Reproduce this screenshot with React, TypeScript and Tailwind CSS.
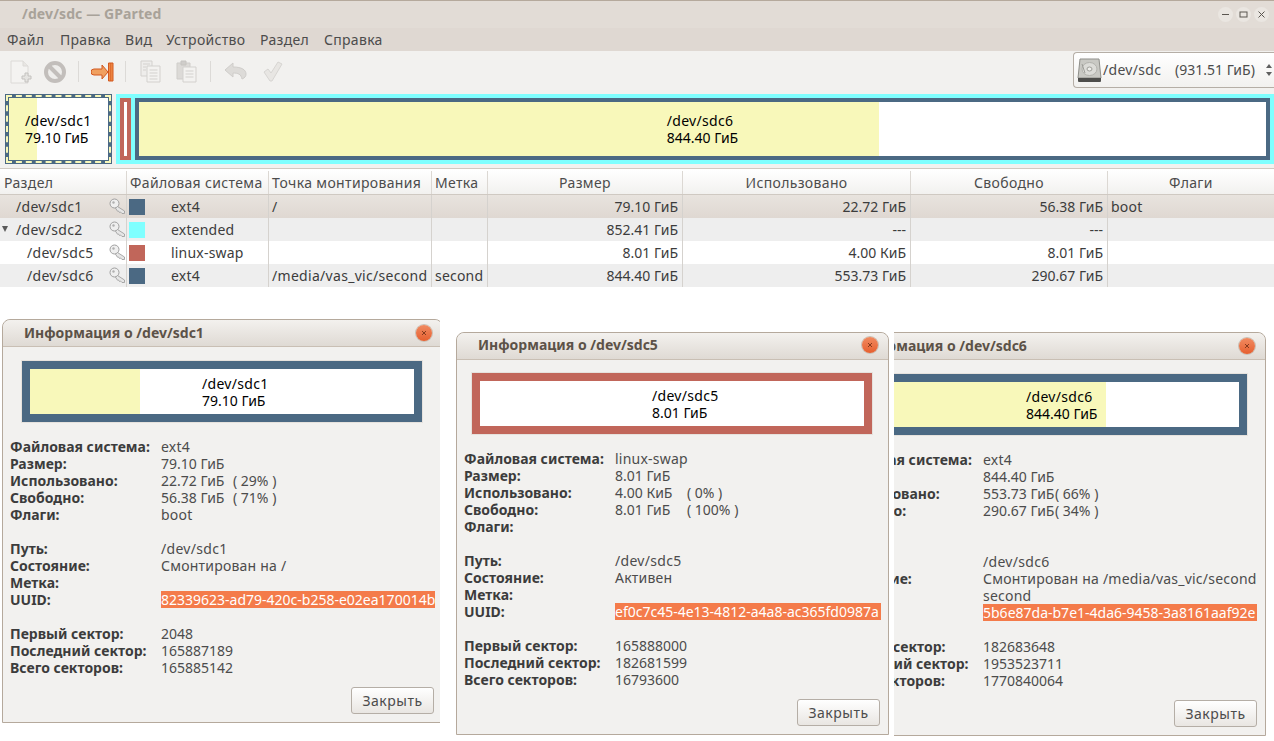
import type { ReactNode } from "react"

const font = { fontFamily: '"Noto Sans", sans-serif' }

const columns = "grid grid-cols-[127px_142px_163px_56px_195px_228px_197px_166px]"

const rows = [
  { name: "/dev/sdc1", indent: "pl-4", color: "bg-[#4b6983]", fs: "ext4", mount: "/", label: "", size: "79.10 ГиБ", used: "22.72 ГиБ", free: "56.38 ГиБ", flags: "boot", bg: "bg-gradient-to-b from-[#e8e3de] to-[#dfd8d2]" },
  { name: "/dev/sdc2", indent: "pl-4", color: "bg-[#7fffff]", fs: "extended", mount: "", label: "", size: "852.41 ГиБ", used: "---", free: "---", flags: "", bg: "bg-[#eeeeee]", arrow: true },
  { name: "/dev/sdc5", indent: "pl-[27px]", color: "bg-[#c1665a]", fs: "linux-swap", mount: "", label: "", size: "8.01 ГиБ", used: "4.00 КиБ", free: "8.01 ГиБ", flags: "", bg: "bg-white" },
  { name: "/dev/sdc6", indent: "pl-[27px]", color: "bg-[#4b6983]", fs: "ext4", mount: "/media/vas_vic/second", label: "second", size: "844.40 ГиБ", used: "553.73 ГиБ", free: "290.67 ГиБ", flags: "", bg: "bg-[#eeeeee]" },
]

function KeyIcon() {
  return (
    <svg width="17" height="16" viewBox="0 0 17 16" className="absolute left-[109px] top-[3px]">
      <circle cx="5.500" cy="5.500" r="4.500" fill="#efefef" stroke="#a0a0a0" />
      <circle cx="4.500" cy="4.500" r="1.200" fill="#b0b0b0" />
      <path d="M8.500 8.500l7 4.500v2.500h-2.500l-1.500-1.500-1 .5-1-1.500-1 .2-2-3z" fill="#e6e6e6" stroke="#a0a0a0" strokeWidth="0.9" />
    </svg>
  )
}

function NewIcon() {
  return (
    <svg width="22" height="24" viewBox="0 0 22 24">
      <path d="M1 1h12l5 5v17H1z" fill="#f4f3f1" stroke="#dcdad7" />
      <path d="M13 1v5h5" fill="#e8e6e3" stroke="#dcdad7" />
      <path d="M15 13h3v3h3v3h-3v3h-3v-3h-3v-3h3z" fill="#e5e4e1" stroke="#c4c2bf" />
    </svg>
  )
}

function CancelIcon() {
  return (
    <svg width="22" height="22" viewBox="0 0 22 22">
      <circle cx="11" cy="11" r="9" fill="#eeedeb" stroke="#c2bebb" strokeWidth="4" />
      <path d="M5 5l12 12" stroke="#c2bebb" strokeWidth="4" />
    </svg>
  )
}

function ApplyIcon() {
  return (
    <svg width="23" height="20" viewBox="0 0 23 20">
      <path d="M3 7h8V3l6 7-6 7v-4H3a3 3 0 0 1 0-6z" fill="#f0a060" stroke="#d2581f" strokeLinejoin="round" />
      <path d="M17.500 1h4.500v18h-4.500z" fill="#ef8a45" stroke="#d2581f" />
      <path d="M19.700 1v18" stroke="#d2581f" strokeWidth="0.7" />
    </svg>
  )
}

function CopyIcon() {
  return (
    <svg width="21" height="23" viewBox="0 0 21 23">
      <path d="M1 1h11v15H1z" fill="#eeedeb" stroke="#d3d1ce" />
      <path d="M7 6h13v16H7z" fill="#f3f2f0" stroke="#d3d1ce" />
      <path d="M9.500 10h8M9.500 13h8M9.500 16h8M9.500 19h8M3 4h7M3 7h3M3 10h3" stroke="#d3d1ce" />
    </svg>
  )
}

function PasteIcon() {
  return (
    <svg width="21" height="23" viewBox="0 0 21 23">
      <path d="M1 3h13v16H1z" fill="#dcdad7" stroke="#cfcdca" />
      <path d="M5 1h5v4H5z" fill="#cfcdca" stroke="#c6c4c1" />
      <path d="M7 7h13v15H7z" fill="#f3f2f0" stroke="#d3d1ce" />
      <path d="M9.500 11h8M9.500 14h8M9.500 17h8" stroke="#d3d1ce" />
    </svg>
  )
}

function UndoIcon() {
  return (
    <svg width="23" height="19" viewBox="0 0 23 19">
      <path d="M9 1L1 8l8 7v-4c5 0 8 1 9 6 3-1 4-3 4-5 0-4-4-7-13-7z" fill="#dddbd8" stroke="#cfcdca" strokeLinejoin="round" />
    </svg>
  )
}

function CheckIcon() {
  return (
    <svg width="20" height="21" viewBox="0 0 20 21">
      <path d="M1 11l4-3 3 4 7-11 4 2-10 17h-2z" fill="#e8e6e3" stroke="#d7d5d2" strokeLinejoin="round" />
    </svg>
  )
}

function DiskIcon() {
  return (
    <svg width="25" height="25" viewBox="0 0 25 25">
      <path d="M3 1h19l2 19H1z" fill="#c9c9c4" stroke="#8f8f8a" />
      <path d="M1 20h23v3a1 1 0 0 1-1 1H2a1 1 0 0 1-1-1z" fill="#4e4e4c" />
      <ellipse cx="12.500" cy="11" rx="7.500" ry="6.500" fill="#dcdcd8" stroke="#b2b2ad" />
      <ellipse cx="12.500" cy="11" rx="2.500" ry="2" fill="#f0f0ec" stroke="#9d9d98" />
      <path d="M5 6l3 9" stroke="#9d9d98" />
    </svg>
  )
}

function WindowButton({ children }: { children: ReactNode }) {
  return (
    <span className="flex h-[15px] w-[15px] items-center justify-center rounded-full bg-[#eae6e1]">
      <svg width="9" height="9" viewBox="0 0 9 9" stroke="#5a5650" fill="none">
        {children}
      </svg>
    </span>
  )
}

function CloseButton() {
  return (
    <span className="flex h-[16px] w-[16px] items-center justify-center rounded-full bg-gradient-to-b from-[#f08a60] to-[#e65f2e] shadow-[0_0_0_1px_#c9bfb4]">
      <svg width="6" height="6" viewBox="0 0 6 6" stroke="#7a3418" strokeWidth="0.9">
        <path d="M1 1l4 4M5 1l-4 4" />
      </svg>
    </span>
  )
}

interface PartitionGraphProps {
  color: string
  usedWidth: string
  textPad: string
  name: string
  size: string
}

function PartitionGraph({ color, usedWidth, textPad, name, size }: PartitionGraphProps) {
  return (
    <div className="h-[63px] w-[402px] shrink-0 border border-[#e6e2dd]">
      <div className={`h-full border-[8px] ${color}`}>
        <div className="relative h-full bg-white">
          <div className={`absolute inset-y-0 left-0 bg-[#f8f8ba] ${usedWidth}`} />
          <div className={`relative pt-[6px] text-sm leading-[17px] text-black ${textPad}`}>
            <div className="tracking-[0.3px]">{name}</div>
            <div>{size}</div>
          </div>
        </div>
      </div>
    </div>
  )
}

function InfoRow({ label, children }: { label?: string; children?: ReactNode }) {
  return (
    <div className="flex h-[17px] text-sm leading-[17px] whitespace-nowrap">
      <div className="w-[151px] shrink-0 font-bold text-[#3c3c3c]">{label}</div>
      <div className="text-[#4c4c4c]">{children}</div>
    </div>
  )
}

interface InfoProps {
  title: string
  graph: ReactNode
  fs: string
  size: string
  used: string
  usedPct: string
  free: string
  freePct: string
  flags: string
  path: string
  state: string
  label: string
  uuid: string
  first: string
  last: string
  total: string
  graphPad: string
  uuidWidth: string
  rowPad: string
  titlePad: string
  btnPad: string
  className: string
}

function InfoDialog(p: InfoProps) {
  return (
    <div className={`flex shrink-0 flex-col rounded-t-[8px] border border-[#b5a99c] bg-[#f2f1ef] ${p.className}`}>
      <div className={`flex h-[27px] shrink-0 items-center justify-between rounded-t-[8px] border-b border-[#c9bfb4] bg-gradient-to-b from-[#f3f1ee] to-[#dfdad4] pr-[10px] ${p.titlePad}`}>
        <span className="text-sm font-bold text-[#5c5248]">{p.title}</span>
        <CloseButton />
      </div>
      <div className={p.graphPad}>{p.graph}</div>
      <div className={`mt-[15px] ${p.rowPad}`}>
        <InfoRow label="Файловая система:">
          <span className="tracking-[0.22px]">{p.fs}</span>
        </InfoRow>
        <InfoRow label="Размер:">{p.size}</InfoRow>
        <InfoRow label="Использовано:">
          <span className="inline-block w-[72px]">{p.used}</span>
          {p.usedPct}
        </InfoRow>
        <InfoRow label="Свободно:">
          <span className="inline-block w-[72px]">{p.free}</span>
          {p.freePct}
        </InfoRow>
        <InfoRow label="Флаги:">
          <span className="tracking-[0.22px]">{p.flags}</span>
        </InfoRow>
        <div className="h-[17px]" />
        <InfoRow label="Путь:">
          <span className="tracking-[0.3px]">{p.path}</span>
        </InfoRow>
        <InfoRow label="Состояние:">
          <span className="tracking-[0.22px]">{p.state}</span>
        </InfoRow>
        <InfoRow label="Метка:">
          <span className="tracking-[0.22px]">{p.label}</span>
        </InfoRow>
        <InfoRow label="UUID:">
          <span className={`block bg-[#f47b4a] text-white ${p.uuidWidth}`}>{p.uuid}</span>
        </InfoRow>
        <div className="h-[17px]" />
        <InfoRow label="Первый сектор:">{p.first}</InfoRow>
        <InfoRow label="Последний сектор:">{p.last}</InfoRow>
        <InfoRow label="Всего секторов:">{p.total}</InfoRow>
      </div>
      <div className={`mt-auto flex justify-end pb-2 ${p.btnPad}`}>
        <button className="h-[27px] w-[83px] rounded-[3px] border border-[#b5aea6] bg-gradient-to-b from-white to-[#e9e6e2] text-sm tracking-[0.5px] text-[#4c4c4c]">
          Закрыть
        </button>
      </div>
    </div>
  )
}

export default function App() {
  return (
    <div className="relative h-[741px] w-[1274px] overflow-hidden bg-white" style={font}>
      {/* Title bar */}
      <div className="flex h-[28px] items-center justify-between border-t border-[#b5a99c] bg-[#e2dcd6] pr-[5px] pl-[22px]">
        <span className="pb-[2px] text-sm font-bold tracking-[0.1px] text-[#a8a299]">/dev/sdc — GParted</span>
        <div className="flex gap-[3px]">
          <WindowButton>
            <path d="M1 4.500h7" />
          </WindowButton>
          <WindowButton>
            <rect x="1" y="2" width="7" height="5" />
          </WindowButton>
          <WindowButton>
            <path d="M1.500 1.500l6 6M7.500 1.500l-6 6" />
          </WindowButton>
        </div>
      </div>

      {/* Menu */}
      <div className="flex h-[23px] items-center bg-[#dfd8d2] pl-[7px] text-sm tracking-[0.3px] text-[#4c4c4c]">
        <span className="w-[53px]">Файл</span>
        <span className="w-[65px]">Правка</span>
        <span className="w-[41px]">Вид</span>
        <span className="w-[94px]">Устройство</span>
        <span className="w-[64px]">Раздел</span>
        <span>Справка</span>
      </div>

      {/* Toolbar */}
      <div className="flex h-[41px] items-center bg-[#f2f1ef] pl-[10px]">
        <NewIcon />
        <div className="ml-3">
          <CancelIcon />
        </div>
        <div className="ml-[12px] h-[21px] w-px bg-[#dcdad7]" />
        <div className="ml-[12px]">
          <ApplyIcon />
        </div>
        <div className="ml-[11px] h-[21px] w-px bg-[#dcdad7]" />
        <div className="ml-[14px]">
          <CopyIcon />
        </div>
        <div className="ml-[15px]">
          <PasteIcon />
        </div>
        <div className="ml-[13px] h-[21px] w-px bg-[#dcdad7]" />
        <div className="ml-[13px]">
          <UndoIcon />
        </div>
        <div className="ml-[16px]">
          <CheckIcon />
        </div>
        <div className="mb-[3px] ml-auto flex h-[36px] w-[201px] items-center gap-[1px] rounded-l-[4px] border border-r-0 border-[#b5aea6] bg-gradient-to-b from-white to-[#f2f1ef] pl-[3px] text-sm whitespace-nowrap text-[#4c4c4c]">
          <DiskIcon />
          <span className="w-[71px] tracking-[0.3px]">/dev/sdc</span>
          <span>(931.51 ГиБ)</span>
          <svg width="8" height="16" viewBox="0 0 8 16" className="ml-[9px]" fill="#5f5f5f">
            <path d="M4 2l3 4H1zM4 14l3-4H1z" />
          </svg>
        </div>
      </div>

      {/* Partition map */}
      <div className="flex h-[77px] gap-1 border-b border-[#cfc9c2] bg-[#f2f1ef] pt-[2px] pl-[5px]">
        <div className="h-[70px] w-[107px] border border-[#4b6983]">
          <div className="h-full border-[2px] border-dashed border-[#f8f8ba] bg-[#4b6983]">
            <div className="h-full p-px">
              <div className="relative h-full bg-white">
                <div className="absolute inset-y-0 left-0 w-[28px] bg-[#f8f8ba]" />
                <div className="relative pt-[14px] pl-[16px] text-sm leading-[17px] text-black">
                  <div className="tracking-[0.3px]">/dev/sdc1</div>
                  <div>79.10 ГиБ</div>
                </div>
              </div>
            </div>
          </div>
        </div>
        <div className="flex h-[70px] flex-1 gap-1 bg-[#7fffff] p-1">
          <div className="w-[11px] border-[4px] border-[#c1665a] bg-white" />
          <div className="flex-1 border-[4px] border-[#4b6983] bg-white">
            <div className="relative h-full">
              <div className="absolute inset-y-0 left-0 w-[740px] bg-[#f8f8ba]" />
              <div className="relative flex h-full justify-center pt-[10px] text-sm leading-[17px] text-black">
                <div>
                  <div className="tracking-[0.3px]">/dev/sdc6</div>
                  <div>844.40 ГиБ</div>
                </div>
              </div>
            </div>
          </div>
        </div>
      </div>

      <div className="h-px bg-white" />

      {/* Partition list */}
      <div className={`${columns} h-[25px] border-b border-[#cfc9c2] bg-gradient-to-b from-white to-[#f2f1ef] pt-px text-sm leading-[23px] tracking-[0.35px] text-[#4c4c4c]`}>
        <div className="border-r border-[#dcd8d3] pl-1">Раздел</div>
        <div className="border-r border-[#dcd8d3] pl-[3px]">Файловая система</div>
        <div className="border-r border-[#dcd8d3] pl-[3px]">Точка монтирования</div>
        <div className="border-r border-[#dcd8d3] pl-[3px]">Метка</div>
        <div className="border-r border-[#dcd8d3] text-center">Размер</div>
        <div className="border-r border-[#dcd8d3] text-center">Использовано</div>
        <div className="border-r border-[#dcd8d3] text-center">Свободно</div>
        <div className="text-center">Флаги</div>
      </div>
      {rows.map((row) => (
        <div key={row.name} className={`${columns} h-[23px] text-sm leading-[23px] text-[#3c3c3c] ${row.bg}`}>
          <div className={`relative border-r border-[#d5d2ce] tracking-[0.3px] ${row.indent}`}>
            {row.arrow && <span className="absolute top-[8px] left-[2px] h-0 w-0 border-t-[6px] border-r-[3.5px] border-l-[3.5px] border-t-[#5a5a5a] border-r-transparent border-l-transparent" />}
            {row.name}
            <KeyIcon />
          </div>
          <div className="flex items-center border-r border-[#d5d2ce] pl-[2px]">
            <span className={`h-4 w-4 shrink-0 ${row.color}`} />
            <span className="ml-[26px] tracking-[0.2px]">{row.fs}</span>
          </div>
          <div className="border-r border-[#d5d2ce] pl-[3px] tracking-[0.3px] whitespace-nowrap">{row.mount}</div>
          <div className="border-r border-[#d5d2ce] pl-[3px] tracking-[0.2px]">{row.label}</div>
          <div className="border-r border-[#d5d2ce] pr-1 text-right">{row.size}</div>
          <div className="border-r border-[#d5d2ce] pr-1 text-right">{row.used}</div>
          <div className="border-r border-[#d5d2ce] pr-1 text-right">{row.free}</div>
          <div className="pl-[3px] tracking-[0.2px]">{row.flags}</div>
        </div>
      ))}

      {/* Info dialogs, pasted over the page as separate windows */}
      <div className="absolute top-[319px] left-[2px] h-[404px] w-[438px] overflow-hidden">
        <InfoDialog
          className="h-[404px] w-[441px]"
          title="Информация о /dev/sdc1"
          titlePad="pl-[21px]"
          graphPad="mt-[13px] pl-[18px]"
          rowPad="pl-[7px]"
          btnPad="pr-[8px]"
          uuidWidth="w-[274px]"
          graph={<PartitionGraph color="border-[#4b6983]" usedWidth="w-[110px]" textPad="pl-[172px]" name="/dev/sdc1" size="79.10 ГиБ" />}
          fs="ext4"
          size="79.10 ГиБ"
          used="22.72 ГиБ"
          usedPct="( 29% )"
          free="56.38 ГиБ"
          freePct="( 71% )"
          flags="boot"
          path="/dev/sdc1"
          state="Смонтирован на /"
          label=""
          uuid="82339623-ad79-420c-b258-e02ea170014b"
          first="2048"
          last="165887189"
          total="165885142"
        />
      </div>

      <div className="absolute top-[332px] left-[456px]">
        <InfoDialog
          className="h-[403px] w-[433px]"
          title="Информация о /dev/sdc5"
          titlePad="pb-[2px] pl-[21px]"
          graphPad="mt-[12px] pl-[14px]"
          rowPad="pl-[7px]"
          btnPad="pr-[8px]"
          uuidWidth="w-[266px]"
          graph={<PartitionGraph color="border-[#c1665a]" usedWidth="w-0" textPad="pl-[172px]" name="/dev/sdc5" size="8.01 ГиБ" />}
          fs="linux-swap"
          size="8.01 ГиБ"
          used="4.00 КиБ"
          usedPct="( 0% )"
          free="8.01 ГиБ"
          freePct="( 100% )"
          flags=""
          path="/dev/sdc5"
          state="Активен"
          label=""
          uuid="ef0c7c45-4e13-4812-a4a8-ac365fd0987a"
          first="165888000"
          last="182681599"
          total="16793600"
        />
      </div>

      <div className="absolute top-[332px] left-[894px] flex h-[404px] w-[372px] justify-end overflow-hidden">
        <InfoDialog
          className="h-[404px] w-[441px]"
          title="Информация о /dev/sdc6"
          titlePad="pl-[21px]"
          graphPad="mt-[13px] pl-[20px]"
          rowPad="pl-[6px]"
          btnPad="pr-[8px]"
          uuidWidth="w-[274px]"
          graph={<PartitionGraph color="border-[#4b6983]" usedWidth="w-[251px]" textPad="pl-[171px]" name="/dev/sdc6" size="844.40 ГиБ" />}
          fs="ext4"
          size="844.40 ГиБ"
          used="553.73 ГиБ"
          usedPct="( 66% )"
          free="290.67 ГиБ"
          freePct="( 34% )"
          flags=""
          path="/dev/sdc6"
          state="Смонтирован на /media/vas_vic/second"
          label="second"
          uuid="5b6e87da-b7e1-4da6-9458-3a8161aaf92e"
          first="182683648"
          last="1953523711"
          total="1770840064"
        />
      </div>
    </div>
  )
}
